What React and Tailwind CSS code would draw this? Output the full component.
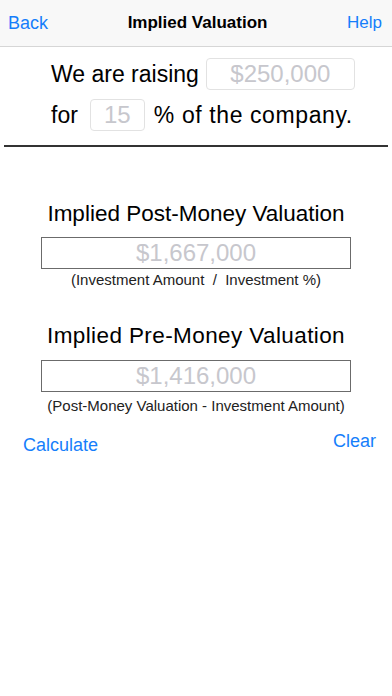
import React from 'react';

const font = { fontFamily: '"Liberation Sans", Arial, sans-serif' };

const ResultBox = ({ value }) => (
  <div className="mx-[41px] flex h-[32px] items-center justify-center border border-[#6b6b6b] text-[24px] text-[#c7c7cd]">
    {value}
  </div>
);

export default function App() {
  return (
    <div className="h-[696px] w-[392px] bg-white text-black" style={font}>
      <div className="flex h-[47px] items-center justify-between border-b border-[#d6d6d6] bg-[#f8f8f8] px-[8px]">
        <span className="text-[18px] text-[#157efb]">Back</span>
        <span className="text-[17px] font-bold">Implied Valuation</span>
        <span className="pr-[2px] text-[17px] text-[#157efb]">Help</span>
      </div>

      <div className="ml-[51px] mt-[11px] flex h-[32px] items-center text-[23px]">
        <span>We are raising</span>
        <div className="ml-[7px] flex h-[32px] w-[149px] items-center justify-center rounded-[4px] border border-[#e2e2e2] text-[24px] text-[#c7c7cd]">
          $250,000
        </div>
      </div>
      <div className="ml-[51px] mt-[9px] flex h-[32px] items-center text-[23px]">
        <span>for</span>
        <div className="ml-[12px] flex h-[32px] w-[55px] items-center justify-center rounded-[4px] border border-[#e2e2e2] text-[24px] text-[#c7c7cd]">
          15
        </div>
        <span className="ml-[9px] tracking-[0.6px]">% of the company.</span>
      </div>

      <div className="mx-[4px] mt-[14px] h-[2px] bg-[#333]" />

      <div className="mt-[54px] text-center text-[22.5px] leading-[26px]">Implied Post-Money Valuation</div>
      <div className="mt-[10px]">
        <ResultBox value="$1,667,000" />
      </div>
      <div className="mt-[2px] text-center text-[15px] leading-[18px] text-[#222]">
        (Investment Amount&nbsp; /&nbsp; Investment %)
      </div>

      <div className="mt-[34px] text-center text-[22.5px] leading-[26px] tracking-[0.4px]">Implied Pre-Money Valuation</div>
      <div className="mt-[11px]">
        <ResultBox value="$1,416,000" />
      </div>
      <div className="mt-[5px] text-center text-[15px] leading-[18px] text-[#222]">
        (Post-Money Valuation - Investment Amount)
      </div>

      <div className="flex items-start justify-between px-[16px]">
        <span className="ml-[7px] mt-[19px] text-[18px] leading-[22px] text-[#157efb]">Calculate</span>
        <span className="mt-[15px] text-[18px] leading-[22px] text-[#157efb]">Clear</span>
      </div>
    </div>
  );
}
